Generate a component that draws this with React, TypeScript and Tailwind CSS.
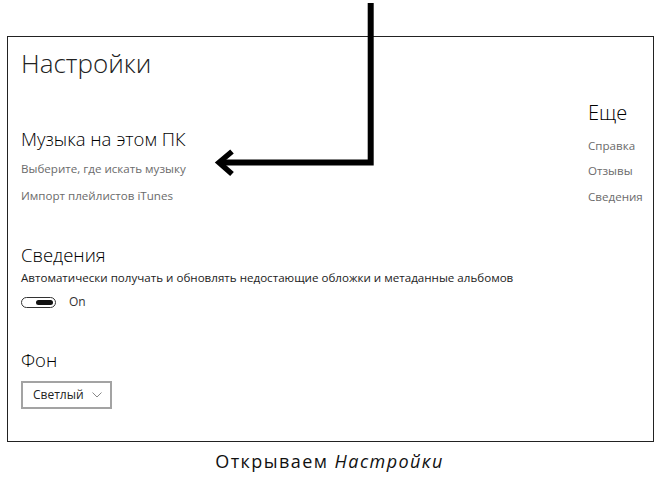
import React from "react";

const ui = { fontFamily: '"Open Sans", "Noto Sans", sans-serif' };

const Toggle = () => (
  <div className="flex items-center h-[16px]">
    <div className="w-[35px] h-[11px] rounded-full border-[1.5px] border-[#333] flex items-center justify-end px-[2px]">
      <div className="w-[17px] h-[5px] rounded-full bg-[#111]" />
    </div>
    <span className="ml-[13px] text-[12px] text-[#333]">On</span>
  </div>
);

const Arrow = () => (
  <svg className="absolute left-0 top-0 pointer-events-none" width="659" height="480" viewBox="0 0 659 480">
    <path d="M370.7 3 V162.5 H221" fill="none" stroke="#000" strokeWidth="6" />
    <path d="M232 151.5 L219 162.5 L232 174" fill="none" stroke="#000" strokeWidth="5.5" />
  </svg>
);

export default function App() {
  return (
    <div className="relative w-[659px] h-[480px] bg-white" style={ui}>
      <div className="pt-[36px] pl-[7px]">
        <div className="w-[647px] h-[406px] border border-[#222] flex">
          <div className="flex-1 pl-[13px] pt-[10px] flex flex-col items-start">
            <h1 className="text-[26px] leading-[32px] font-light text-[#222]">Настройки</h1>
            <h2 className="mt-[48px] text-[18.5px] leading-[24px] font-light text-[#000]">Музыка на этом ПК</h2>
            <div className="mt-[10px] text-[11.6px] leading-[16px] text-[#6b6b6b]">Выберите, где искать музыку</div>
            <div className="mt-[11px] text-[11.6px] leading-[16px] text-[#6b6b6b]">Импорт плейлистов iTunes</div>
            <h2 className="mt-[39px] text-[18.5px] leading-[24px] font-light text-[#000]">Сведения</h2>
            <div className="mt-[3px] text-[11.6px] leading-[16px] text-[#222]">
              Автоматически получать и обновлять недостающие обложки и метаданные альбомов
            </div>
            <div className="mt-[8px]">
              <Toggle />
            </div>
            <h2 className="mt-[38px] text-[18.5px] leading-[24px] font-light text-[#000]">Фон</h2>
            <div className="mt-[9px] w-[91px] h-[28px] border-2 border-[#a3a3a3] flex items-center pl-[10px] pr-[8px]">
              <span className="text-[12px] text-[#222]">Светлый</span>
              <svg className="ml-auto" width="10" height="6" viewBox="0 0 10 6">
                <path d="M0.5 0.5 L5 5 L9.5 0.5" fill="none" stroke="#888" strokeWidth="1" />
              </svg>
            </div>
          </div>
          <div className="w-[65px] pt-[62px] flex flex-col items-start">
            <h2 className="text-[20px] leading-[28px] font-light text-[#000]">Еще</h2>
            <div className="mt-[11px] text-[11.6px] leading-[16px] text-[#6b6b6b]">Справка</div>
            <div className="mt-[9px] text-[11.6px] leading-[16px] text-[#6b6b6b]">Отзывы</div>
            <div className="mt-[10px] text-[11.6px] leading-[16px] text-[#6b6b6b]">Сведения</div>
          </div>
        </div>
      </div>
      <p className="mt-[7px] text-center text-[18px] leading-[24px] tracking-[0.08em] text-[#111]">
        Открываем <i>Настройки</i>
      </p>
      <Arrow />
    </div>
  );
}
